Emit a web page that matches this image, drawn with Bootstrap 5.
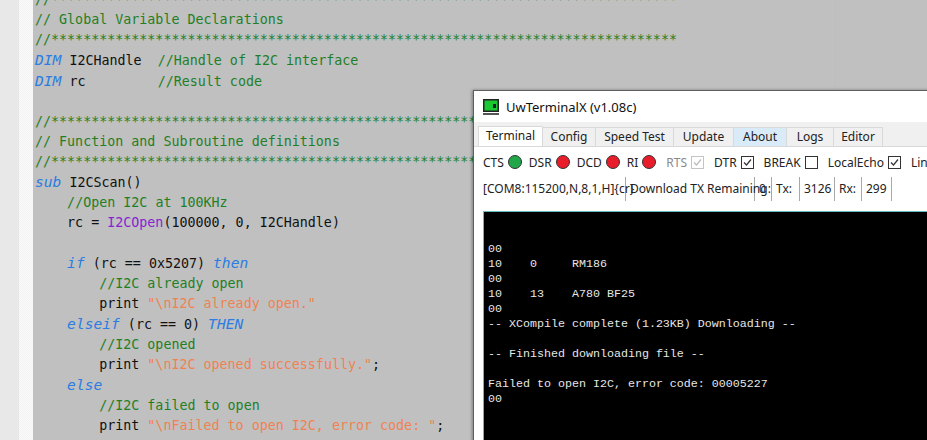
<!DOCTYPE html>
<html lang="en">
<head>
<meta charset="utf-8">
<title>UwTerminalX</title>
<link href="https://cdn.jsdelivr.net/npm/bootstrap@5.3.0/dist/css/bootstrap.min.css" rel="stylesheet">
<style>
html,body{width:927px;height:440px;overflow:hidden;background:#e8e8e8}
.desk{position:relative;width:927px;height:440px;overflow:hidden}
.gutter-a{width:19px;background:#e8e8e8}
.gutter-b{width:14px;background:repeating-conic-gradient(#f2f2f2 0 25%,#fbfbfb 0 50%) 0 0/2px 2px}
.editor{flex:1;background:#c0c0c0;position:relative;overflow:hidden}
.margin-line{position:absolute;left:802px;top:0;width:1px;height:100%;background:#8fd0d0}
.code{margin:-10px 0 0 2px;font:13.33px/20px "DejaVu Sans Mono",monospace;color:#111;white-space:pre;overflow:visible}
.code .cm{color:#1f7f25}
.code .kw{color:#2a7de1;font-style:italic;font-size:14.6px}
.code .st{color:#ee8350}
.code .fn{color:#8a1fd0}
.appwin{position:absolute;left:473px;top:90px;width:470px;height:360px;background:#fff;border:1px solid #5f5f5f;box-shadow:-1px 0 3px rgba(0,0,0,.35);font:12px "Noto Sans",sans-serif;color:#222}
.titlebar{height:31px;padding-left:8px;gap:6px;font-size:13px;color:#111;background:#fff}
.tabstrip{height:25px;padding:5px 0 0 4px;background:#f0f0f0;border-bottom:1px solid #d9d9d9;flex-wrap:nowrap}
.tabstrip .tabby{height:19px;border:1px solid #d9d9d9;border-bottom:0;border-left:0;background:#f0f0f0;color:#222;padding:0;font-size:12px;line-height:18px;text-align:center}
.tabstrip .tabby.on{background:#fff;height:20px;margin-top:-1px;border-left:1px solid #d9d9d9;position:relative}
.tabstrip .tabby.hov{background:#d9ebf9}
.sigrow{height:30px;padding-left:9px;white-space:nowrap;background:#fff}
.led{width:14px;height:14px;border-radius:50%;border:1px solid #333;display:inline-block;flex:none}
.led-g{background:#22a64a}.led-r{background:#e81c2a}
.tick{width:13px;height:13px;border:1px solid #333;flex:none;display:inline-block}
.tick svg{display:block}
.tick.dim{border-color:#c4c4c4}
.dim-t{color:#8a8a8a}
.statrow{height:24px;padding-left:9px;white-space:nowrap;background:#fff}
.statrow span{height:24px;line-height:24px;display:block;border-right:1px solid #a8a8a8;text-align:left}
.term{margin:10px 0 0 9px;height:240px;background:#000;border-top:1px solid #6bb;border-left:1px solid #6bb;color:#e6e6e6;font:11.67px/15px "Liberation Mono",monospace;white-space:pre;padding:15px 0 0 4px}
</style>
</head>
<body>
<div class="desk d-flex">
  <div class="gutter-a"></div>
  <div class="gutter-b"></div>
  <div class="editor">
    <div class="margin-line"></div>
<pre class="code"><span class="cm">//******************************************************************************</span>
<span class="cm">// Global Variable Declarations</span>
<span class="cm">//******************************************************************************</span>
<span class="kw">DIM</span> I2CHandle  <span class="cm">//Handle of I2C interface</span>
<span class="kw">DIM</span> rc         <span class="cm">//Result code</span>

<span class="cm">//******************************************************************************</span>
<span class="cm">// Function and Subroutine definitions</span>
<span class="cm">//******************************************************************************</span>
<span class="kw">sub</span> I2CScan()
    <span class="cm">//Open I2C at 100KHz</span>
    rc = <span class="fn">I2COpen</span>(100000, 0, I2CHandle)

    <span class="kw">if</span> (rc == 0x5207) <span class="kw">then</span>
        <span class="cm">//I2C already open</span>
        print <span class="st">"\nI2C already open."</span>
    <span class="kw">elseif</span> (rc == 0) <span class="kw">THEN</span>
        <span class="cm">//I2C opened</span>
        print <span class="st">"\nI2C opened successfully."</span>;
    <span class="kw">else</span>
        <span class="cm">//I2C failed to open</span>
        print <span class="st">"\nFailed to open I2C, error code: "</span>;
        <span class="kw">exitsub</span></pre>
  </div>
  <div class="appwin">
    <div class="titlebar d-flex align-items-center">
      <svg width="18" height="18" viewBox="0 0 18 18"><rect x="1" y="1" width="16" height="13" fill="#222"/><rect x="2.500" y="2.500" width="13" height="10" fill="#19c832"/><rect x="11" y="6" width="3" height="4" fill="#123"/><rect x="1" y="15" width="16" height="2" fill="#555"/></svg>
      <span>UwTerminalX (v1.08c)</span>
    </div>
    <ul class="nav tabstrip">
      <li class="tabby on" style="width:65px">Terminal</li>
      <li class="tabby" style="width:53px">Config</li>
      <li class="tabby" style="width:78px">Speed Test</li>
      <li class="tabby" style="width:60px">Update</li>
      <li class="tabby hov" style="width:53px">About</li>
      <li class="tabby" style="width:47px">Logs</li>
      <li class="tabby" style="width:49px">Editor</li>
    </ul>
    <div class="sigrow d-flex align-items-center">
      <span>CTS</span><i class="led led-g ms-1"></i>
      <span class="sp-a">DSR</span><i class="led led-r ms-1"></i>
      <span class="sp-a">DCD</span><i class="led led-r ms-1"></i>
      <span class="sp-a">RI</span><i class="led led-r ms-1"></i>
      <span class="sp-b dim-t">RTS</span><i class="tick dim ms-1"><svg width="11" height="11" viewBox="0 0 11 11"><path d="M2 5.500 4.500 8 9 2.500" fill="none" stroke="#bbb" stroke-width="1.200"/></svg></i>
      <span class="sp-b">DTR</span><i class="tick ms-1"><svg width="11" height="11" viewBox="0 0 11 11"><path d="M2 5.500 4.500 8 9 2.500" fill="none" stroke="#333" stroke-width="1.200"/></svg></i>
      <span class="sp-b">BREAK</span><i class="tick ms-1"></i>
      <span class="sp-b">LocalEcho</span><i class="tick ms-1"><svg width="11" height="11" viewBox="0 0 11 11"><path d="M2 5.500 4.500 8 9 2.500" fill="none" stroke="#333" stroke-width="1.200"/></svg></i>
      <span class="sp-b">LineMode</span>
    </div>
    <div class="statrow d-flex">
      <span style="width:143px">[COM8:115200,N,8,1,H]{cr}</span>
      <span class="ps-1" style="width:129px">Download TX Remaining:</span>
      <span class="ps-1" style="width:17px">0</span>
      <span class="ps-1" style="width:28px">Tx:</span>
      <span class="ps-1" style="width:35px">3126</span>
      <span class="ps-1" style="width:27px">Rx:</span>
      <span class="ps-1" style="width:30px">299</span>
    </div>
    <div class="term">
00
10    0     RM186
00
10    13    A780 BF25
00
-- XCompile complete (1.23KB) Downloading --

-- Finished downloading file --

Failed to open I2C, error code: 00005227
00</div>
  </div>
</div>
<style>.sp-a{margin-left:7px}.sp-b{margin-left:10px}</style>
<script src="https://cdn.jsdelivr.net/npm/bootstrap@5.3.0/dist/js/bootstrap.bundle.min.js"></script>
</body>
</html>
